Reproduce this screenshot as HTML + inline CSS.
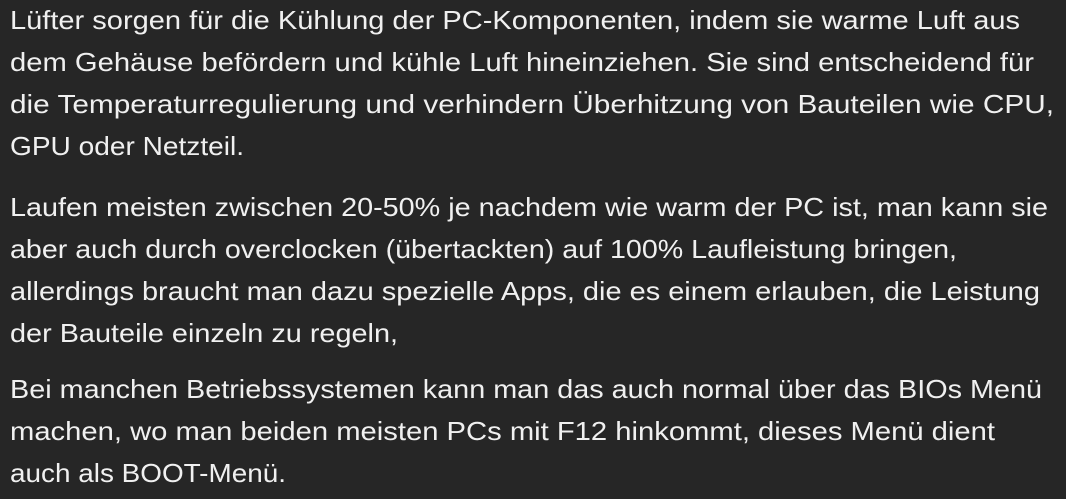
<!DOCTYPE html>
<html><head><meta charset="utf-8"><style>
html,body{margin:0;padding:0;background:#262626;width:1066px;height:499px;overflow:hidden}
svg text{font-family:"Liberation Sans",sans-serif;font-size:26px;fill:#f0f0f0}
</style></head><body>
<svg width="1066" height="499" xmlns="http://www.w3.org/2000/svg">
<text x="10" y="29" textLength="1010" lengthAdjust="spacingAndGlyphs">Lüfter sorgen für die Kühlung der PC-Komponenten, indem sie warme Luft aus</text>
<text x="10" y="71" textLength="1024" lengthAdjust="spacingAndGlyphs">dem Gehäuse befördern und kühle Luft hineinziehen. Sie sind entscheidend für</text>
<text x="10" y="113" textLength="1044" lengthAdjust="spacingAndGlyphs">die Temperaturregulierung und verhindern Überhitzung von Bauteilen wie CPU,</text>
<text x="10" y="155" textLength="234" lengthAdjust="spacingAndGlyphs">GPU oder Netzteil.</text>
<text x="10" y="216" textLength="1038" lengthAdjust="spacingAndGlyphs">Laufen meisten zwischen 20-50% je nachdem wie warm der PC ist, man kann sie</text>
<text x="10" y="258" textLength="947" lengthAdjust="spacingAndGlyphs">aber auch durch overclocken (übertackten) auf 100% Laufleistung bringen,</text>
<text x="10" y="300" textLength="1030" lengthAdjust="spacingAndGlyphs">allerdings braucht man dazu spezielle Apps, die es einem erlauben, die Leistung</text>
<text x="10" y="342" textLength="388" lengthAdjust="spacingAndGlyphs">der Bauteile einzeln zu regeln,</text>
<text x="10" y="398" textLength="1032" lengthAdjust="spacingAndGlyphs">Bei manchen Betriebssystemen kann man das auch normal über das BIOs Menü</text>
<text x="10" y="440" textLength="985" lengthAdjust="spacingAndGlyphs">machen, wo man beiden meisten PCs mit F12 hinkommt, dieses Menü dient</text>
<text x="10" y="482" textLength="276" lengthAdjust="spacingAndGlyphs">auch als BOOT-Menü.</text>
</svg>
</body></html>
